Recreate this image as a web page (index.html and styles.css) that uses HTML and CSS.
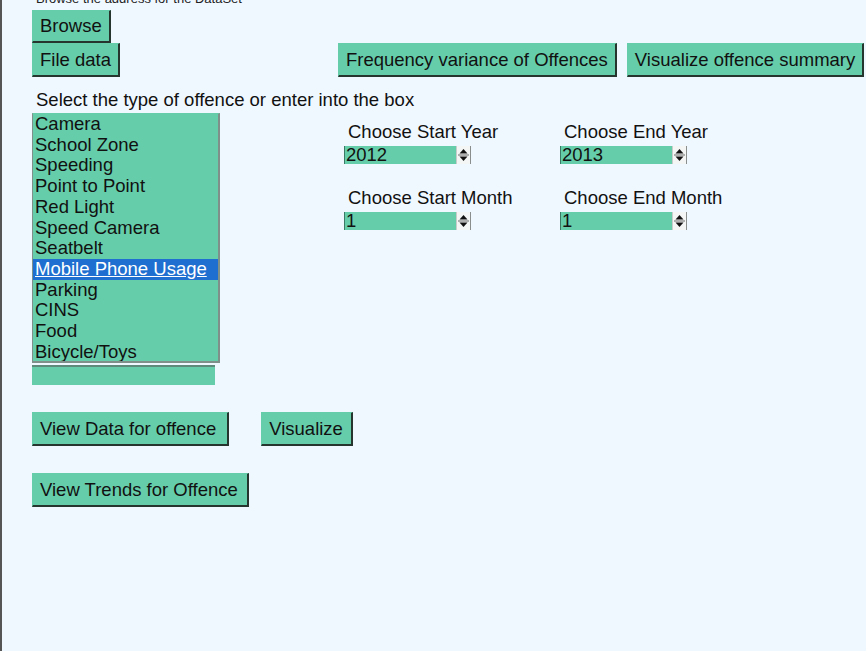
FILE: index.html
```html
<!DOCTYPE html>
<html>
<head>
<meta charset="utf-8">
<link rel="stylesheet" href="styles.css">
</head>
<body>
<div class="app">
  <div class="note">Browse the address for the DataSet</div>
  <div class="row row-browse">
    <button class="btn btn-browse">Browse</button>
  </div>
  <div class="row row-file">
    <button class="btn">File data</button>
    <button class="btn btn-freq">Frequency variance of Offences</button>
    <button class="btn btn-summary">Visualize offence summary</button>
  </div>
  <div class="prompt">Select the type of offence or enter into the box</div>
  <div class="main">
    <div class="left">
      <ul class="listbox">
        <li>Camera</li>
        <li>School Zone</li>
        <li>Speeding</li>
        <li>Point to Point</li>
        <li>Red Light</li>
        <li>Speed Camera</li>
        <li>Seatbelt</li>
        <li class="selected"><span>Mobile Phone Usage</span></li>
        <li>Parking</li>
        <li>CINS</li>
        <li>Food</li>
        <li>Bicycle/Toys</li>
      </ul>
      <div class="entry"></div>
    </div>
    <div class="right">
      <div class="field">
        <div class="label">Choose Start Year</div>
        <div class="spin"><span class="val">2012</span><span class="arrows"><svg width="13" height="16" viewBox="0 0 13 16"><path d="M2.5 6.5 L6.5 2 L10.5 6.5 Z" fill="#111"/><line x1="1" y1="8" x2="12" y2="8" stroke="#666" stroke-width="1"/><path d="M2.5 9.5 L6.5 14 L10.5 9.5 Z" fill="#111"/></svg></span></div>
      </div>
      <div class="field">
        <div class="label">Choose End Year</div>
        <div class="spin"><span class="val">2013</span><span class="arrows"><svg width="13" height="16" viewBox="0 0 13 16"><path d="M2.5 6.5 L6.5 2 L10.5 6.5 Z" fill="#111"/><line x1="1" y1="8" x2="12" y2="8" stroke="#666" stroke-width="1"/><path d="M2.5 9.5 L6.5 14 L10.5 9.5 Z" fill="#111"/></svg></span></div>
      </div>
      <div class="field">
        <div class="label">Choose Start Month</div>
        <div class="spin"><span class="val">1</span><span class="arrows"><svg width="13" height="16" viewBox="0 0 13 16"><path d="M2.5 6.5 L6.5 2 L10.5 6.5 Z" fill="#111"/><line x1="1" y1="8" x2="12" y2="8" stroke="#666" stroke-width="1"/><path d="M2.5 9.5 L6.5 14 L10.5 9.5 Z" fill="#111"/></svg></span></div>
      </div>
      <div class="field">
        <div class="label">Choose End Month</div>
        <div class="spin"><span class="val">1</span><span class="arrows"><svg width="13" height="16" viewBox="0 0 13 16"><path d="M2.5 6.5 L6.5 2 L10.5 6.5 Z" fill="#111"/><line x1="1" y1="8" x2="12" y2="8" stroke="#666" stroke-width="1"/><path d="M2.5 9.5 L6.5 14 L10.5 9.5 Z" fill="#111"/></svg></span></div>
      </div>
    </div>
  </div>
  <div class="row row-view">
    <button class="btn btn-viewdata">View Data for offence</button>
    <button class="btn btn-vis">Visualize</button>
  </div>
  <div class="row row-trends">
    <button class="btn btn-trends">View Trends for Offence</button>
  </div>
</div>
</body>
</html>
```

FILE: styles.css
```css
html, body {
  margin: 0;
  padding: 0;
  height: 100%;
  background: #f0f8ff;
  overflow: hidden;
}

body {
  font-family: "Liberation Sans", Arial, sans-serif;
  color: #111;
}

.app {
  display: flow-root;
  height: 100%;
  border-left: 2px solid #555;
  box-sizing: border-box;
}

.note {
  font-size: 13px;
  line-height: 15px;
  margin-top: -9px;
  height: 15px;
  padding-left: 34px;
  color: #222;
}

.row {
  display: flex;
  padding-left: 30px;
}

.row-browse {
  margin-top: 4px;
}

.btn {
  font-family: "Liberation Sans", Arial, sans-serif;
  font-size: 18.5px;
  color: #111;
  background: #66cdaa;
  border: 2px solid;
  border-color: #66cdaa #26362f #26362f #66cdaa;
  border-width: 1px 2px 2px 1px;
  padding: 0 7px 0 7px;
  height: 34px;
  line-height: 30px;
  margin: 0;
  cursor: pointer;
}

.btn-browse {
  height: 33px;
}

.btn-freq {
  margin-left: 218px;
}

.btn-summary {
  margin-left: 10px;
}

.prompt {
  font-size: 18.5px;
  line-height: 22px;
  padding-left: 34px;
  margin-top: 12px;
}

.main {
  display: flex;
  padding-left: 30px;
  margin-top: 2px;
}

.left {
  width: 188px;
}

.listbox {
  list-style: none;
  margin: 0;
  padding: 0;
  background: #66cdaa;
  border: 1px solid #7f8f8a;
  border-right-width: 2px;
  border-bottom-width: 2px;
  border-top-color: #66cdaa;
  font-size: 18.5px;
  line-height: 20.7px;
  height: 250px;
  overflow: hidden;
  box-sizing: border-box;
}

.listbox li {
  padding-left: 2px;
  white-space: nowrap;
}

.listbox li.selected {
  background: #1e6fd0;
  color: #fff;
}

.listbox li.selected span {
  text-decoration: underline;
}

.entry {
  width: 183px;
  height: 20px;
  margin-top: 2px;
  background: #66cdaa;
  border-top: 2px solid #5e8a7c;
  box-sizing: border-box;
}

.right {
  margin-left: 124px;
  padding-top: 8px;
  display: grid;
  grid-template-columns: 216px 220px;
  grid-auto-rows: min-content;
  row-gap: 23px;
}

.label {
  font-size: 18.5px;
  line-height: 22px;
  padding-left: 4px;
  margin-bottom: 3px;
  white-space: nowrap;
}

.spin {
  display: flex;
  align-items: stretch;
  width: 127px;
  height: 18px;
  background: #66cdaa;
  border-left: 1px solid #3d7a66;
  box-sizing: border-box;
}

.val {
  flex: 1;
  font-size: 18.5px;
  line-height: 18px;
  padding-left: 1px;
}

.arrows {
  width: 15px;
  background: #f4f6f5;
  border-left: 1px solid #c8cccb;
  border-right: 1px solid #8a8f8d;
  box-sizing: border-box;
  display: flex;
  align-items: center;
  justify-content: center;
}

.row-view {
  margin-top: 27px;
}

.btn-viewdata {
  padding-right: 11px;
}

.btn-vis {
  margin-left: 32px;
  padding-right: 8px;
}

.btn-trends {
  padding-right: 9px;
}

.row-trends {
  margin-top: 27px;
}
```
